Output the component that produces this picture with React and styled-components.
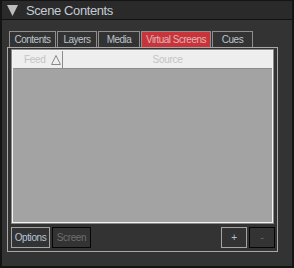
import React from "react";
import styled, { createGlobalStyle } from "styled-components";

const GlobalStyle = createGlobalStyle`
  html, body {
    margin: 0;
    padding: 0;
    background: #333333;
  }
  * {
    box-sizing: border-box;
  }
`;

const tabs = [
  { label: "Contents", width: 47 },
  { label: "Layers", width: 40 },
  { label: "Media", width: 42 },
  { label: "Virtual Screens", width: 70, active: true },
  { label: "Cues", width: 41 },
];

const App = () => {
  return (
    <>
      <GlobalStyle />
      <Window>
        <Header>
          <svg width="11" height="11" viewBox="0 0 11 11">
            <polygon points="0,0 11,0 5.5,11" fill="#bdbdbd" />
          </svg>
          <span>Scene Contents</span>
        </Header>
        <Body>
          <TabRow>
            {tabs.map((t) => (
              <Tab key={t.label} $w={t.width} $active={t.active}>
                {t.label}
              </Tab>
            ))}
          </TabRow>
          <Panel>
            <Table>
              <HeadRow>
                <FeedCol>
                  <span>Feed</span>
                  <svg width="10" height="10" viewBox="0 0 10 10">
                    <polygon
                      points="5,0.5 9.5,9.5 0.5,9.5"
                      fill="none"
                      stroke="#8a8a8a"
                      strokeWidth="1"
                    />
                  </svg>
                </FeedCol>
                <SourceCol>Source</SourceCol>
              </HeadRow>
              <TableBody />
            </Table>
            <ButtonRow>
              <Group>
                <Button $w={39}>Options</Button>
                <Button $w={39} $disabled>
                  Screen
                </Button>
              </Group>
              <Group>
                <Button $w={26}>+</Button>
                <Button $w={26} $disabled>
                  -
                </Button>
              </Group>
            </ButtonRow>
          </Panel>
        </Body>
      </Window>
    </>
  );
};

export default App;

const Window = styled.div`
  width: 294px;
  height: 268px;
  background-color: #333333;
  border: 2px solid #141414;
  border-top: 1px solid #141414;
  display: flex;
  flex-direction: column;
  font-family: "Liberation Sans", Arial, sans-serif;
`;

const Header = styled.div`
  height: 19px;
  background-color: #2a2a2a;
  border-bottom: 1px solid #121212;
  display: flex;
  align-items: center;
  gap: 8px;
  padding-left: 5px;
  svg {
    margin-top: 1px;
  }
  span {
    color: #c3cad3;
    font-size: 13px;
    letter-spacing: -0.4px;
  }
`;

const Body = styled.div`
  flex: 1;
  padding: 11px 14px 14px 5px;
  display: flex;
  flex-direction: column;
`;

const TabRow = styled.div`
  display: flex;
  gap: 1px;
  padding-left: 2px;
`;

const Tab = styled.div`
  width: ${(p) => p.$w}px;
  height: 16px;
  border: 1px solid #8e8e8e;
  border-bottom: none;
  background-color: ${(p) => (p.$active ? "#c8343a" : "#333333")};
  color: ${(p) => (p.$active ? "#e0b4b8" : "#bcc3cc")};
  font-size: 10px;
  letter-spacing: -0.5px;
  display: flex;
  align-items: center;
  justify-content: center;
`;

const Panel = styled.div`
  flex: 1;
  border: 1px solid #a8a8a8;
  padding: 1px 2px 3px 3px;
  display: flex;
  flex-direction: column;
`;

const Table = styled.div`
  flex: 1;
  margin-right: 1px;
  border: 1px solid #8a8a8a;
  outline: 1px solid #f4f4f4;
  outline-offset: -2px;
  display: flex;
  flex-direction: column;
`;

const HeadRow = styled.div`
  height: 18px;
  margin: 1px 1px 0 1px;
  background-color: #eeeeee;
  border-bottom: 1px solid #8c8c8c;
  display: flex;
  font-size: 10px;
  letter-spacing: -0.3px;
  color: #c4c4c4;
`;

const FeedCol = styled.div`
  width: 50px;
  border-right: 1px solid #8c8c8c;
  display: flex;
  align-items: center;
  justify-content: space-between;
  padding: 0 1px 0 11px;
  span {
    margin-top: -1px;
  }
`;

const SourceCol = styled.div`
  flex: 1;
  display: flex;
  align-items: center;
  justify-content: center;
  margin-top: -1px;
`;

const TableBody = styled.div`
  flex: 1;
  background-color: #a3a3a3;
  margin: 0 1px;
  border-bottom: 1px solid #f4f4f4;
`;

const ButtonRow = styled.div`
  display: flex;
  justify-content: space-between;
  margin-top: 3px;
`;

const Group = styled.div`
  display: flex;
  gap: 2px;
`;

const Button = styled.div`
  width: ${(p) => p.$w}px;
  height: 21px;
  border: 1px solid ${(p) => (p.$disabled ? "#050505" : "#a4a4a4")};
  color: ${(p) => (p.$disabled ? "#6e6e6e" : "#b4c4d6")};
  font-size: 10px;
  letter-spacing: -0.4px;
  display: flex;
  align-items: center;
  justify-content: center;
`;
